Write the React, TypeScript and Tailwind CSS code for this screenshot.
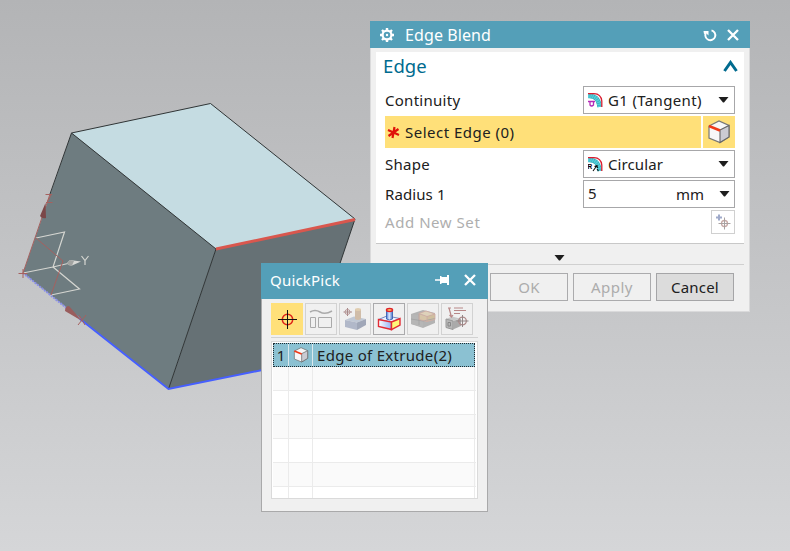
import type { ReactNode } from "react";

function Viewport() {
  return (
    <svg className="absolute inset-0" width="790" height="551" viewBox="0 0 790 551" fill="none">
      <path d="M71.5 133L210.500 103.500L355 219L216 249Z" fill="#c5dce2" />
      <path d="M71.500 133L216 249L168.500 389L23 273Z" fill="#6e7c80" />
      <path d="M216 249L355 219L307 361L168.500 389Z" fill="#667175" />
      <g stroke="#303536" strokeWidth="1">
        <path d="M50 194L71.500 133L210.500 103.500L355 219L307 361" />
        <path d="M71.500 133L216 249L168.500 389" />
      </g>
      <path d="M216 249L355 219.500" stroke="#d9574e" strokeWidth="3" />
      <path d="M23 273L80 319" stroke="#8a8fe8" strokeWidth="2" strokeDasharray="2 1" />
      <path d="M80 319L168.500 389L307 361" stroke="#465fff" strokeWidth="2" />
      <g stroke="#d5d6d1" strokeWidth="1.200">
        <path d="M23 273L53 267L70 263M36 238L64.500 232L53 267L79.500 289L51 295" />
        <path d="M81.500 256L85 260.500L88.500 256M85 260.500V265" />
      </g>
      <path d="M67 263L70 260L81 261.500L72 265.500Q68 266 67 263Z" fill="#d8d8d5" />
      <path d="M67 263L70 260L74 261L72 265.500Q68 266 67 263Z" fill="#a2a4a2" />
      <g stroke="#a5615f" strokeWidth="1">
        <path d="M23 273L50 194M36 238L63 261L51 295M18.500 273.500H27.500M23 269V278" />
        <path d="M45.500 194.500H52M46 202.500H52.500M47 202.500L51 195" />
        <path d="M79 315L85 325M86 315L78 325" />
      </g>
      <path d="M45.500 203L40 216Q42 219 46 218Z" fill="#7b4748" />
      <path d="M82 321L69 306Q65 306 65 311Z" fill="#995d5d" />
    </svg>
  );
}

function EdgeCube({ size }: { size: number }) {
  return (
    <svg width={size} height={size} viewBox="0 0 24 24">
      <path d="M2 6L12 1L22 5.500V17L13 22.500L2 18Z" fill="#f7f7f8" stroke="#777" strokeWidth="1.200" />
      <path d="M13 10L22 5.500V17L13 22.500Z" fill="#cbcbd2" stroke="#666" strokeWidth="1.100" />
      <path d="M2 6L13 10.500" stroke="#f03a18" strokeWidth="2.500" />
    </svg>
  );
}

function BlendIcon({ radius = false }: { radius?: boolean }) {
  return (
    <svg width="15" height="15" viewBox="0 0 15 15" fill="none">
      <path d="M0 3Q10.500 2 11.500 14" stroke="#2b9fac" strokeWidth="4.500" />
      <path d="M0 3Q10.500 2 11.500 14" stroke="#55d0dc" strokeWidth="4" strokeDasharray="1.600 .5" />
      <path d="M0 .7H6Q13 1 13.800 8V14" stroke="#d91d30" strokeWidth="1.300" />
      {radius ? (
        <>
          <text x="-.5" y="11.500" className="fill-black font-['Liberation_Sans'] text-[6.5px] font-bold">R</text>
          <path d="M5 14L9 8.500M6.500 9.500L9 8.500L9.500 11M9 12L10.500 14" stroke="#111" strokeWidth="1.100" />
        </>
      ) : (
        <path d="M0 8.500H7M2 9V12Q3.500 14 5.500 12V9" stroke="#b52cb8" strokeWidth="1.300" />
      )}
    </svg>
  );
}

function Caret({ className = "" }: { className?: string }) {
  return <svg className={className} width="11" height="6" viewBox="0 0 11 6"><path d="M.5 0H10.500L6 5.500H5Z" fill="#1e1e1e" /></svg>;
}

function CloseIcon({ className }: { className: string }) {
  return <svg className={className} viewBox="0 0 12 12"><path d="M1 1L11 11M11 1L1 11" stroke="white" strokeWidth="2.300" /></svg>;
}

function SelectBox({ children, className }: { children: ReactNode; className: string }) {
  return <div className={`flex h-7 w-[152px] shrink-0 items-center border border-[#a7a7a9] bg-white ${className}`}>{children}</div>;
}

function EdgeBlend() {
  return (
    <section className="absolute left-[370px] top-[21px] flex h-[291px] w-[380px] flex-col border border-t-0 border-[#dadadb] bg-[#f0f0f0]">
      <header className="-mx-px flex h-[27px] shrink-0 items-center bg-[#549fb8] pl-2.5 pr-[11px] text-white">
        <svg width="14" height="14" viewBox="0 0 14 14" fill="none">
          <circle cx="7" cy="7" r="4.400" stroke="white" strokeWidth="2.200" />
          <path d="M7 0V2M7 12V14M0 7H2M12 7H14M2 2L3.500 3.500M10.500 10.500L12 12M12 2L10.500 3.500M3.500 10.500L2 12" stroke="white" strokeWidth="2.400" />
          <circle cx="7" cy="7" r="1.200" fill="white" />
        </svg>
        <span className="ml-[11px] text-[16px] tracking-[0.1px]">Edge Blend</span>
        <svg className="ml-auto" width="14" height="14" viewBox="0 0 14 14" fill="none">
          <path d="M8.500 2.300A5 5 0 1 1 2.800 5" stroke="white" strokeWidth="1.900" />
          <path d="M.5 3H5.500V7.500L3.500 5.500L1 6Z" fill="white" />
        </svg>
        <CloseIcon className="ml-2.5 h-3 w-3" />
      </header>
      <div className="mx-[5px] mt-1 flex h-[192px] shrink-0 flex-col border-b border-[#c8c8c8] bg-white pl-[9px] pr-[9px]">
        <div className="flex h-[30px] items-center justify-between text-[#006b8f]">
          <h2 className="-ml-0.5 -mt-0.5 text-[18.5px] tracking-[0.1px]">Edge</h2>
          <svg className="-mr-[3px] -mt-0.5" width="15" height="12" viewBox="0 0 15 12" fill="none"><path d="M1.500 11L7.500 2.500L13.500 11" stroke="#006b8f" strokeWidth="3" /></svg>
        </div>
        <div className="mt-1 flex h-7 items-center justify-between">
          <span className="tracking-[0.28px]">Continuity</span>
          <SelectBox className="pl-1 pr-[5px]"><BlendIcon /><span className="ml-[5px] mr-auto whitespace-nowrap tracking-[0.35px]">G1 (Tangent)</span><Caret className="-mt-px" /></SelectBox>
        </div>
        <div className="mt-0.5 flex h-8 gap-0.5">
          <div className="flex w-[316px] items-center bg-[#ffe079]">
            <svg className="ml-0.5" width="13" height="13" viewBox="0 0 13 13"><path d="M7.500 1L5.500 12M1 4L12 9M11.500 3L1.500 10" stroke="#e01209" strokeWidth="2.200" /></svg>
            <span className="ml-[5px] tracking-[0.48px]">Select Edge (0)</span>
          </div>
          <div className="flex w-8 items-center justify-center bg-[#ffe079]"><EdgeCube size={24} /></div>
        </div>
        <div className="mt-0.5 flex h-7 items-center justify-between">
          <span className="tracking-[0.25px]">Shape</span>
          <SelectBox className="pl-1 pr-[5px]"><BlendIcon radius /><span className="ml-[5px] mr-auto tracking-[0.1px]">Circular</span><Caret className="-mt-px" /></SelectBox>
        </div>
        <div className="mt-0.5 flex h-7 items-center justify-between">
          <span className="tracking-[0.1px]">Radius 1</span>
          <SelectBox className="pl-1 pr-1"><span className="-mt-0.5">5</span><span className="ml-auto mr-[15px]">mm</span><Caret className="-mt-px" /></SelectBox>
        </div>
        <div className="mt-0.5 flex h-6 items-center justify-between text-[#aeaeae]">
          <span className="tracking-[0.55px]">Add New Set</span>
          <div className="flex h-6 w-6 items-center justify-center border border-[#d0d0d0]">
            <svg width="16" height="16" viewBox="0 0 16 16" fill="none"><path d="M1 3.500H7M4 .5V6.500" stroke="#9faaca" strokeWidth="2" /><circle cx="9.500" cy="9.500" r="3" stroke="#c7a9a5" strokeWidth="1.300" /><path d="M3.500 9.500H15.500M9.500 3.500V15.500" stroke="#a9a2a2" /></svg>
          </div>
        </div>
      </div>
      <div className="mx-[5px] flex h-[21px] shrink-0 items-center justify-center border-b border-[#d0d0d0] pr-0.5 pt-2"><Caret /></div>
      <div className="mr-[15px] mt-2 flex h-7 justify-end gap-[5px] text-[#acacac]">
        <button className="w-[78px] border border-[#ababad] tracking-[0.3px]">OK</button>
        <button className="w-[78px] border border-[#ababad] tracking-[0.5px]">Apply</button>
        <button className="w-[78px] border border-[#a5a5a7] bg-[#dcdcdc] tracking-[0.2px] text-[#202020]">Cancel</button>
      </div>
    </section>
  );
}

function PointIcon() {
  return <svg width="22" height="22" viewBox="0 0 22 22" fill="none"><circle cx="11.500" cy="11.500" r="5.200" stroke="#df261a" strokeWidth="1.500" /><path d="M2 11.500H21M11.500 2V21" stroke="#111" /></svg>;
}

function SketchIcon() {
  return <svg width="24" height="22" viewBox="0 0 24 22" fill="none" stroke="#aaa"><path d="M1 4Q6 1 11 4T23 3" strokeWidth="1.500" /><path d="M1.500 9.500H6.500V19.500H1.500ZM9.500 9.500H22.500V19.500H9.500Z" /></svg>;
}

function BossIcon({ active = false }: { active?: boolean }) {
  if (active) {
    return (
      <svg width="24" height="24" viewBox="0 0 24 24">
        <defs>
          <linearGradient id="front"><stop stopColor="#fff" /><stop offset="1" stopColor="#93b4f5" /></linearGradient>
          <linearGradient id="cylinder"><stop stopColor="#4774d6" /><stop offset=".45" stopColor="#e2edff" /><stop offset="1" stopColor="#4772ca" /></linearGradient>
        </defs>
        <path d="M1.500 12.500L10 9L23 11.500L14.500 15Z" fill="#edf4ff" stroke="#526db8" strokeWidth=".8" />
        <path d="M1.500 12.500L14.500 15V22.500L1.500 19.500Z" fill="url(#front)" stroke="#e22b35" strokeWidth="1.400" />
        <path d="M14.500 15L23 11.500V18L14.500 22.500Z" fill="#fff879" stroke="#e22b35" strokeWidth="1.400" />
        <path d="M9.500 3V12Q12.500 14 15.500 12V3Z" fill="url(#cylinder)" stroke="#315bac" strokeWidth=".8" />
        <ellipse cx="12.500" cy="3" rx="3" ry="1.500" fill="#ffe26b" stroke="#df222b" strokeWidth="1.500" />
      </svg>
    );
  }
  return (
    <svg width="24" height="24" viewBox="0 0 24 24">
      <path d="M2 13L11 9.500L23 12L14 15.500Z" fill="#c0c8d5" /><path d="M2 13L14 15.500V23L2 20Z" fill="#b1b8c9" /><path d="M14 15.500L23 12V18L14 23Z" fill="#a0a7b8" />
      <path d="M12 2.500H18V12Q15 14 12 12Z" fill="#d0bda9" /><ellipse cx="15" cy="2.500" rx="3" ry="1.500" fill="#e0cdb0" />
      <path d="M.5 5H9M4.500 1V9" stroke="#a78989" /><circle cx="4.500" cy="5" r="2.500" fill="none" stroke="#b89797" />
    </svg>
  );
}

function BlocksIcon() {
  return <svg width="26" height="20" viewBox="0 0 26 20"><path d="M1 5L13 1L25 4V14L13 19L1 15Z" fill="#b3b3b3" /><path d="M1 5L13 7V18L1 15Z" fill="#b6b6b6" /><path d="M9 4.500L16 2L25 5L17 7.500Z" fill="#ded2ba" /><path d="M9 5L17 7.500V12.500L9 10.500Z" fill="#d6c5a8" /><path d="M17 7.500L25 5V10.500L17 12.500Z" fill="#cfbf9f" /><path d="M1 10L13 12L25 9.500M9 5V16" stroke="#a2a2a2" fill="none" strokeWidth=".8" /><path d="M9 4.500L17 7.500L25 5M17 7.500V12.500M9 4.500L16 2L25 5V10.500L17 12.500L9 10.500Z" stroke="#cfaba3" fill="none" strokeWidth=".8" /></svg>;
}

function NoteIcon() {
  return <svg className="shrink-0" width="24" height="24" viewBox="0 0 24 24" fill="none"><path d="M1 12L7 9.500L15 11.500L8 14Z" fill="#c8c8c8" /><path d="M1 12L8 14V22.500L1 20.500Z" fill="#b7b7b7" stroke="#999" /><path d="M8 14L16 11.500V19L8 22.500Z" fill="#aaa" /><path d="M3 15.500H5.500V19H3Z" stroke="#888" /><path d="M3 1H6M4 1L6.500 10M4.500 8L6.500 10L8 8M9 1H18M9 3.500H21M9 6.500H15" stroke="#b88787" strokeWidth="1.200" /><circle cx="17.500" cy="14" r="3.800" stroke="#ae8989" strokeWidth="1.300" /><path d="M11.500 14H23.500M17.500 8V20" stroke="#928787" /></svg>;
}

function Tool({ active = false, children }: { active?: boolean; children: ReactNode }) {
  return <button className={`flex h-8 w-8 items-center justify-center border ${active ? "border-[#aaaaac]" : "border-[#d2d2d2]"}`}>{children}</button>;
}

function QuickPick() {
  return (
    <section className="absolute left-[261px] top-[263px] flex h-[249px] w-[227px] flex-col border border-t-0 border-[#a9a9aa] bg-[#f0f0f0]">
      <header className="-mx-px flex h-9 shrink-0 items-center bg-[#549fb8] pb-0.5 pl-[9px] pr-3 text-white">
        <span className="tracking-[0.2px]">QuickPick</span>
        <svg className="ml-auto" width="15" height="10" viewBox="0 0 15 10" fill="white"><path d="M0 4.200H5V1H6.500V2H12V0H14V10H12V8H6.500V9H5V5.800H0Z" /></svg>
        <CloseIcon className="ml-3.5 h-3 w-3" />
      </header>
      <div className="ml-[9px] mt-1 flex h-[35px] w-[207px] shrink-0 gap-0.5 border-b border-[#d2d2d2]">
        <button className="flex h-8 w-8 items-center justify-center bg-[#ffe079]"><PointIcon /></button>
        <Tool><SketchIcon /></Tool>
        <Tool><BossIcon /></Tool>
        <Tool active><BossIcon active /></Tool>
        <Tool><BlocksIcon /></Tool>
        <Tool><NoteIcon /></Tool>
      </div>
      <div className="ml-[9px] mt-[3px] h-[158px] w-[207px] overflow-hidden border border-[#dadada] bg-white p-px">
        <div className="flex h-6 w-[202px] border border-dotted border-[#202b30] bg-[#8bc1d2]">
          <span className="flex w-[15px] items-center justify-center border-r border-[#dae8ec]">1</span>
          <span className="flex w-6 items-center justify-center border-r border-[#dae8ec]"><EdgeCube size={16} /></span>
          <span className="flex items-center whitespace-nowrap pl-1 tracking-[0.3px]">Edge of Extrude(2)</span>
        </div>
        {[0, 1, 2, 3, 4, 5].map((row) => (
          <div key={row} className="flex h-6 border-b border-[#ebebeb] odd:bg-white even:bg-[#fafafa]">
            <span className="w-4 border-r border-[#ebebeb]" />
            <span className="w-6 border-r border-[#ebebeb]" />
            <span className="w-[162px] border-r border-[#ebebeb]" />
          </div>
        ))}
      </div>
    </section>
  );
}

export default function App() {
  return (
    <main className="relative h-[551px] w-[790px] overflow-hidden bg-linear-to-b from-[#b3b4b6] to-[#d5d6d8] font-['Noto_Sans',sans-serif] text-[15px] leading-5 text-[#202020]">
      <Viewport />
      <EdgeBlend />
      <QuickPick />
    </main>
  );
}
